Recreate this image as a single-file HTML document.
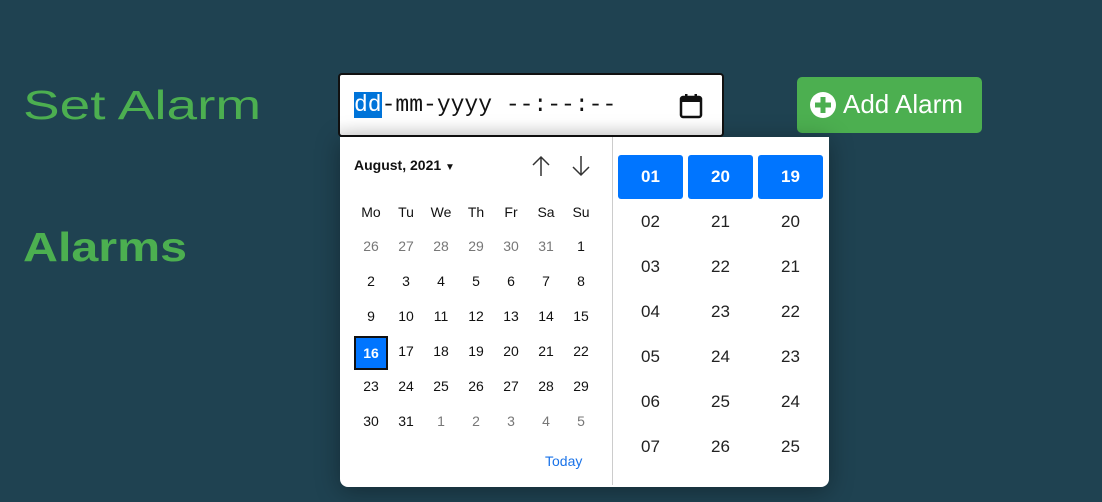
<!DOCTYPE html>
<html><head><style>
body{margin:0;width:1102px;height:502px;background:#1f4251;font-family:"Liberation Sans",sans-serif;position:relative;overflow:hidden}
.h{position:absolute;left:23px;color:#4caf50;font-size:41px;transform-origin:left top;white-space:nowrap}
.inp{position:absolute;left:338px;top:73px;width:382px;height:60px;background:linear-gradient(#fff 75%,#f0f0f0);border:2px solid #111;border-radius:4px}
.inp .t{position:absolute;left:14px;top:17px;font-family:"Liberation Mono",monospace;font-size:23px;color:#111}
.sel{background:#0074d9;color:#fff}
.pop{position:absolute;left:340px;top:137px;width:489px;height:350px;background:#fff;border-radius:0 0 8px 8px;box-shadow:0 4px 24px rgba(0,0,0,.35)}
.div{position:absolute;left:272px;top:0;width:1px;height:348px;background:#ccc}
.c{position:absolute;width:34px;text-align:center;font-size:14px;color:#111}
.g{color:#777}
.tc{position:absolute;width:65px;text-align:center;font-size:17px;color:#222}
.tb{background:#0075ff;color:#fff;font-weight:bold;height:44px;line-height:44px;border-radius:3px}
.btn{position:absolute;left:797px;top:77px;width:185px;height:56px;background:#4caf50;border-radius:5px;color:#fff;font-size:26px}
</style></head><body>
<div class="h" style="top:82px;transform:scaleX(1.34)">Set Alarm</div>
<div class="h" style="top:224px;font-weight:bold;transform:scaleX(1.18)">Alarms</div>
<div class="inp"><div class="t"><span class="sel">dd</span>-mm-yyyy --:--:--</div>
<svg style="position:absolute;left:339px;top:18px" width="24" height="26" viewBox="0 0 24 26"><rect x="2" y="4" width="20" height="20" rx="2" fill="none" stroke="#111" stroke-width="2.5"/><rect x="2" y="4" width="20" height="5" fill="#111"/><rect x="6" y="1" width="2.5" height="5" fill="#111"/><rect x="15.5" y="1" width="2.5" height="5" fill="#111"/></svg></div>
<div class="btn"><svg style="position:absolute;left:12px;top:14px" width="28" height="28" viewBox="0 0 28 28"><circle cx="14" cy="14" r="13" fill="#fff"/><rect x="11.5" y="6" width="5" height="16" fill="#4caf50"/><rect x="6" y="11.5" width="16" height="5" fill="#4caf50"/></svg><span style="position:absolute;left:46px;top:12px">Add Alarm</span></div>
<div class="pop">
<div style="position:absolute;left:14px;top:20px;font-size:14px;font-weight:bold;color:#111">August, 2021 <span style="font-size:10px">▼</span></div>
<svg style="position:absolute;left:190px;top:17px" width="22" height="24" viewBox="0 0 22 24"><path d="M11 22V3M3 11l8-8 8 8" fill="none" stroke="#333" stroke-width="1.5"/></svg>
<svg style="position:absolute;left:230px;top:17px" width="22" height="24" viewBox="0 0 22 24"><path d="M11 2v19M3 13l8 8 8-8" fill="none" stroke="#333" stroke-width="1.5"/></svg>
<div class="div"></div>
<div id="cal"></div>
<div style="position:absolute;left:205px;top:316px;font-size:14px;color:#1a73e8">Today</div>
<div id="tm"></div>
</div>
<script>
var cal=document.getElementById('cal'),h='';
var hd=['Mo','Tu','We','Th','Fr','Sa','Su'];
for(var i=0;i<7;i++)h+='<div class="c" style="left:'+(14+i*35)+'px;top:67px">'+hd[i]+'</div>';
var d=[26,27,28,29,30,31];for(var i=1;i<=31;i++)d.push(i);for(i=1;i<=5;i++)d.push(i);
for(var k=0;k<42;k++){var r=Math.floor(k/7),c=k%7,g=(k<6||k>36)?' g':'';
var st='left:'+(14+c*35)+'px;top:'+(101+r*35)+'px';
if(d[k]==16&&k>6)h+='<div class="c" style="left:14px;top:'+(94+r*35)+'px;width:30px;height:30px;line-height:30px;background:#0075ff;color:#fff;font-weight:bold;border:2px solid #111">16</div>';
else h+='<div class="c'+g+'" style="'+st+'">'+d[k]+'</div>';}
cal.innerHTML=h;
var t='',st=[1,20,19];
for(var c=0;c<3;c++)for(var r=0;r<7;r++){var v=('0'+(st[c]+r)).slice(-2);
if(r==0)t+='<div class="tc tb" style="left:'+(278+c*70)+'px;top:18px">'+v+'</div>';
else t+='<div class="tc" style="left:'+(278+c*70)+'px;top:'+(75+(r-1)*45)+'px">'+v+'</div>';}
document.getElementById('tm').innerHTML=t;
</script>
</body></html>
